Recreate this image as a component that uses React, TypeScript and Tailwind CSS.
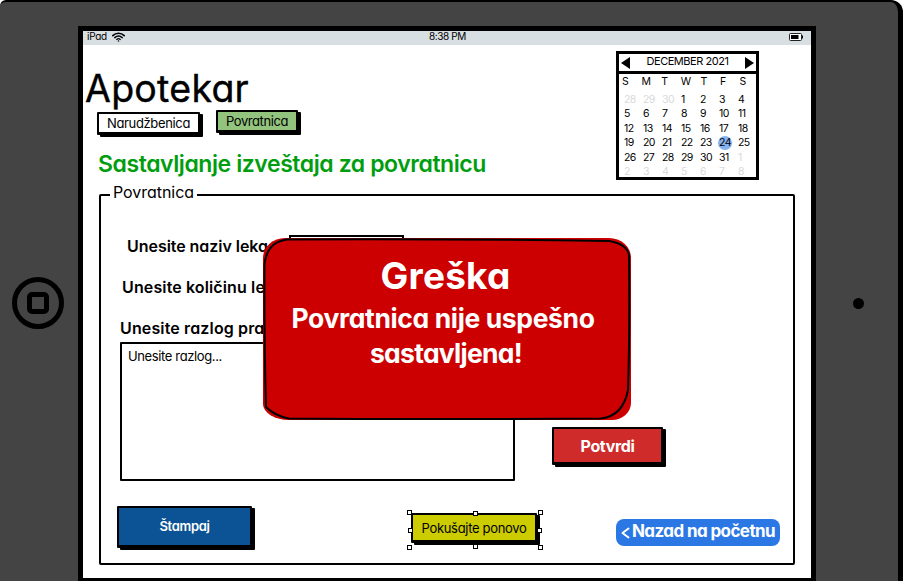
import { useLayoutEffect, useRef, type ReactNode } from "react";

/** Single line of text whose tracking is adjusted so it spans `width` pixels. */
function Fit({ width, className = "", children }: { width: number; className?: string; children: string }) {
  const ref = useRef<HTMLSpanElement>(null);
  useLayoutEffect(() => {
    const el = ref.current;
    if (!el) return;
    el.style.letterSpacing = "0px";
    const natural = el.getBoundingClientRect().width;
    el.style.letterSpacing = `${(width - natural) / children.length}px`;
  }, [width, children]);
  return (
    <span ref={ref} className={`inline-block whitespace-nowrap ${className}`}>
      {children}
    </span>
  );
}

function SketchButton({ className = "", children }: { className?: string; children: ReactNode }) {
  return (
    <button
      className={`flex shrink-0 items-center justify-center rounded-[1px] border-2 border-b-[3px] border-black shadow-[3px_2px_0_#000] ${className}`}
    >
      {children}
    </button>
  );
}

const weekdays = ["S", "M", "T", "W", "T", "F", "S"];
const weeks = [
  [28, 29, 30, 1, 2, 3, 4],
  [5, 6, 7, 8, 9, 10, 11],
  [12, 13, 14, 15, 16, 17, 18],
  [19, 20, 21, 22, 23, 24, 25],
  [26, 27, 28, 29, 30, 31, 1],
  [2, 3, 4, 5, 6, 7, 8],
];

function Calendar() {
  return (
    <div className="mt-[6px] h-[129px] w-[143px] shrink-0 border-3 border-black bg-white text-[11px]">
      <div className="flex h-[20px] items-center justify-between border-b-3 border-black px-[2px]">
        <svg width="9" height="12" viewBox="0 0 9 12" className="-mb-px">
          <path d="M9 0v12L0 6z" />
        </svg>
        <Fit width={82} className="-mt-[4px] leading-[14px]">DECEMBER 2021</Fit>
        <svg width="9" height="12" viewBox="0 0 9 12" className="-mb-px">
          <path d="M0 0v12l9-6z" />
        </svg>
      </div>
      <div className="grid grid-cols-[repeat(7,19.6px)] pt-[1px] pl-[3px] text-[10.5px] leading-[14px]">
        {weekdays.map((d, i) => (
          <span key={i}>{d}</span>
        ))}
      </div>
      <div className="mt-[4px] grid grid-cols-[repeat(7,19px)] pl-[5px] text-[10.5px] leading-[14.4px] tracking-[-0.6px]">
        {weeks.flatMap((week, w) =>
          week.map((day, d) => {
            const outside = (w === 0 && day > 20) || (w > 3 && day < 10);
            const selected = day === 24;
            return (
              <span key={`${w}-${d}`} className={`relative ${outside ? "text-[#d9d9d9]" : ""}`}>
                {selected && (
                  <span className="absolute top-0 -left-[1px] size-[14px] rounded-full bg-[#86b2ef]" />
                )}
                <span className="relative">{day}</span>
              </span>
            );
          }),
        )}
      </div>
    </div>
  );
}

function StatusBar() {
  return (
    <div className="grid h-[14px] grid-cols-3 items-center bg-[#d7dfe2] text-[10px] leading-[12px]">
      <div className="flex items-center gap-[5px] pl-[4px]">
        <Fit width={20} className="-translate-y-[2px]">iPad</Fit>
        <svg width="13" height="10" viewBox="0 0 13 10" fill="none" stroke="#000" strokeLinecap="round" className="-mt-[2px]">
          <path d="M.8 3.6C4 .4 9 .4 12.2 3.6" strokeWidth="1.6" />
          <path d="M2.8 5.6c2.2-2 5.2-2 7.4 0" strokeWidth="1.5" />
          <path d="M4.8 7.4c1-.9 2.4-.9 3.4 0" strokeWidth="1.4" />
          <path d="M6.5 9v.1" strokeWidth="1.5" />
        </svg>
      </div>
      <div className="pl-[1px] text-center">
        <Fit width={37} className="-translate-y-[2px]">8:38 PM</Fit>
      </div>
      <div className="flex justify-end pr-[8px] pb-[2px]">
        <svg width="14" height="8" viewBox="0 0 14 8">
          <rect x=".5" y=".5" width="12" height="7" rx="1" fill="#fff" stroke="#222" />
          <rect x="2" y="2" width="7.5" height="4" />
          <path d="M13 2.5h1v3h-1z" />
        </svg>
      </div>
    </div>
  );
}

function ErrorDialog() {
  return (
    <div className="absolute top-[207px] left-[180px] flex h-[182px] w-[368px] flex-col items-center rounded-[22px_22px_19px_26px/20px_20px_17px_16px] bg-[#cc0000] pt-[18px] text-center font-bold text-white">
      <svg className="absolute inset-0" width="368" height="182" viewBox="0 0 368 182" fill="none" stroke="#000" strokeWidth="2">
        <path d="M24 1.500Q170 .5 346 3Q364 6 366 17Q367 90 365 152Q360 178 338 180.500Q160 181.500 26 180.500Q12 178 3 169Q1 100 1.500 26Q4 4 24 1.500Z" />
      </svg>
      <Fit width={130} className="mr-[3px] text-[37px] leading-[40px]">Greška</Fit>
      <Fit width={303} className="mt-[5px] mr-[8px] text-[26.5px] leading-[35px]">Povratnica nije uspešno</Fit>
      <Fit width={152} className="mr-[2px] text-[26.5px] leading-[34px]">sastavljena!</Fit>
    </div>
  );
}

function Handle({ className }: { className: string }) {
  return <i className={`absolute size-[5px] border border-black bg-white ${className}`} />;
}

export default function App() {
  return (
    <div className="h-[581px] w-[904px] overflow-hidden bg-white font-[Inter,'Noto_Sans',sans-serif] text-black [font-feature-settings:'cv11','ss03']">
      <div className="flex h-[600px] w-[903px] rounded-tl-[6px] rounded-tr-[12px] border-t-2 border-r-5 border-black bg-[#444444]">
        <div className="flex w-[78px] shrink-0 justify-center pt-[275px] pr-[2px]">
          <div className="flex size-[52px] items-center justify-center rounded-full border-5 border-black">
            <div className="size-[22px] rounded-[5px] border-5 border-black" />
          </div>
        </div>

        <div className="relative mt-[24px] h-[557px] w-[738px] shrink-0 border-5 border-black bg-white">
          <StatusBar />
          <header className="flex h-[140px] justify-between pr-[52px]">
            <div>
              <h1 className="mt-[22px] ml-[2px] h-[44px] text-[37.5px] leading-[44px] [-webkit-text-stroke:0.4px_black]">
                <Fit width={164}>Apotekar</Fit>
              </h1>
              <div className="ml-[14px] flex items-start gap-[16px] text-[13px]">
                <SketchButton className="mt-px h-[23px] w-[103px] bg-white">
                  <Fit width={83} className="translate-y-px">Narudžbenica</Fit>
                </SketchButton>
                <SketchButton className="-mt-[1px] h-[23px] w-[82px] bg-[#93c47d]">
                  <Fit width={62} className="translate-y-px">Povratnica</Fit>
                </SketchButton>
              </div>
              <h2 className="mt-[14px] ml-[15px] text-[23px] leading-[30px] font-semibold text-[#009e0f]">
                <Fit width={388}>Sastavljanje izveštaja za povratnicu</Fit>
              </h2>
            </div>
            <Calendar />
          </header>

          <fieldset className="ml-[16px] h-[380px] w-[696px] rounded-[2px] border-2 border-black">
            <legend className="ml-[9px] h-[20px] w-[87px] pl-[3px] text-[16px] leading-[14px]">
              <Fit width={81}>Povratnica</Fit>
            </legend>
            <div className="flex flex-col gap-[17px] pt-[29px] text-[16px] leading-[24px] font-semibold">
              <label className="flex h-[24px] pl-[26px]">
                <Fit width={141}>Unesite naziv leka</Fit>
                <input className="ml-[21px] h-[24px] w-[115px] translate-y-px border-2 border-black" />
              </label>
              <label className="flex h-[24px] pl-[21px]">
                <Fit width={143}>Unesite količinu le</Fit>
              </label>
              <label className="flex h-[24px] pl-[19px]">
                <Fit width={154}>Unesite razlog prav</Fit>
              </label>
            </div>
            <div className="mt-[2px] flex h-[139px] items-start pl-[19px]">
              <div className="h-[139px] w-[395px] rounded-[1px] border-2 border-black pt-[4px] pl-[6px] text-[13px] leading-[16px]">
                <Fit width={94}>Unesite razlog...</Fit>
              </div>
              <SketchButton className="mt-[85px] ml-[37px] h-[38px] w-[111px] bg-[#d02b2b] text-[16px] font-bold text-white">
                <Fit width={54}>Potvrdi</Fit>
              </SketchButton>
            </div>
            <div className="mt-[25px] flex items-start pl-[16px]">
              <SketchButton className="h-[42px] w-[135px] bg-[#0b5394] text-[13px] font-semibold text-white">
                <Fit width={50}>Štampaj</Fit>
              </SketchButton>
              <div className="relative mt-[7px] ml-[159px]">
                <SketchButton className="h-[30px] w-[126px] bg-[#cccc00] text-[13px]">
                  <Fit width={105} className="translate-y-px">Pokušajte ponovo</Fit>
                </SketchButton>
                <Handle className="-top-[3px] -left-[4px]" />
                <Handle className="-top-[2px] left-[62px]" />
                <Handle className="-top-[3px] left-[127px]" />
                <Handle className="top-[15px] -left-[3px]" />
                <Handle className="top-[15px] left-[126px]" />
                <Handle className="top-[32px] -left-[4px]" />
                <Handle className="top-[31px] left-[62px]" />
                <Handle className="top-[32px] left-[127px]" />
              </div>
              <button className="mt-[13px] ml-[79px] flex h-[27px] w-[164px] items-center rounded-[8px] bg-[#2b78e4] pb-[1px] pl-[5px] text-[17px] font-bold text-white">
                <svg width="9" height="12" viewBox="0 0 9 12" className="mt-[2px] mr-[2px]" fill="none" stroke="#fff" strokeWidth="2" strokeLinecap="round" strokeLinejoin="round">
                  <path d="M7.500 1.500L1.500 6l6 4.500" />
                </svg>
                <Fit width={143}>Nazad na početnu</Fit>
              </button>
            </div>
          </fieldset>
          <ErrorDialog />
        </div>

        <div className="flex grow justify-center pt-[296px] pl-[3px]">
          <div className="size-[11px] rounded-full bg-black" />
        </div>
      </div>
    </div>
  );
}
